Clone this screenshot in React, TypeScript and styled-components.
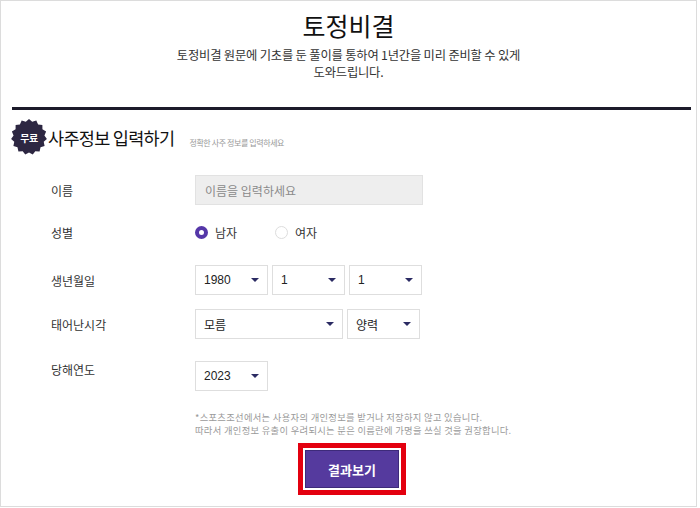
import React from "react";
import styled, { createGlobalStyle } from "styled-components";

const Global = createGlobalStyle`
  html, body { margin: 0; padding: 0; background: #fff; }
  body { font-family: "Noto Sans CJK KR", "Noto Sans", sans-serif; color: #222; }
  * { box-sizing: border-box; }
`;

const Page = styled.div`
  width: 697px;
  height: 507px;
  border: 1px solid #dcdcdc;
  display: flex;
  flex-direction: column;
  overflow: hidden;
`;

const Header = styled.header`
  display: flex;
  flex-direction: column;
  align-items: center;
  padding-top: 8px;
`;

const Title = styled.h1`
  margin: 0;
  font-size: 25px;
  line-height: 32px;
  font-weight: 400;
  color: #111;
`;

const Sub = styled.p`
  margin: 6px 0 0;
  font-size: 12.3px;
  line-height: 17px;
  color: #333;
  text-align: center;
  letter-spacing: -0.2px;
`;

const Divider = styled.hr`
  margin: 26px 0 0 11px;
  width: 679px;
  height: 3px;
  border: 0;
  background: #1c1b2a;
`;

const SectionHead = styled.div`
  display: flex;
  align-items: center;
  margin: 9px 0 0 10px;
`;

const Badge = styled.div`
  position: relative;
  width: 36px;
  height: 36px;
  display: flex;
  align-items: center;
  justify-content: center;
  span {
    position: relative;
    color: #fff;
    font-size: 10px;
    font-weight: 700;
    letter-spacing: -0.5px;
  }
  svg { position: absolute; inset: 0; }
`;

const SectionTitle = styled.h2`
  margin: 0 0 0 1px;
  font-size: 17.5px;
  font-weight: 400;
  color: #111;
  letter-spacing: -0.7px;
`;

const SectionHint = styled.span`
  margin: 10px 0 0 15px;
  font-size: 8px;
  color: #999;
  letter-spacing: -0.4px;
`;

const Form = styled.div`
  display: flex;
  flex-direction: column;
  padding-left: 50px;
`;

const Row = styled.div<{ $mt: number; $top?: boolean }>`
  display: flex;
  align-items: ${(p) => (p.$top ? "flex-start" : "center")};
  margin-top: ${(p) => p.$mt}px;
`;

const Label = styled.div<{ $pt?: number }>`
  width: 144px;
  font-size: 12px;
  color: #333;
  padding-top: ${(p) => p.$pt ?? 0}px;
`;

const Controls = styled.div`
  display: flex;
  gap: 4px;
`;

const NameInput = styled.input`
  width: 228px;
  height: 30px;
  background: #eeeeee;
  border: 1px solid #e2e2e2;
  padding: 0 9px;
  font-family: inherit;
  font-size: 12px;
  outline: none;
  &::placeholder { color: #8a8a8a; }
`;

const RadioGroup = styled.div`
  display: flex;
  align-items: center;
`;

const RadioItem = styled.label`
  display: flex;
  align-items: center;
  gap: 7px;
  width: 80px;
  font-size: 12px;
  color: #333;
`;

const RadioDot = styled.span<{ $on?: boolean }>`
  width: 13px;
  height: 13px;
  border-radius: 50%;
  border: ${(p) => (p.$on ? "4px solid #5537a8" : "1px solid #dddddd")};
  background: #fff;
`;

const Select = styled.div<{ $w: number }>`
  width: ${(p) => p.$w}px;
  height: 30px;
  border: 1px solid #dedede;
  background: #fff;
  display: flex;
  align-items: center;
  justify-content: space-between;
  padding: 0 8px 0 8px;
  font-size: 12px;
  color: #222;
  font-family: "Liberation Sans", "Noto Sans CJK KR", sans-serif;
`;

const Arrow = styled.span`
  width: 0;
  height: 0;
  border-left: 4px solid transparent;
  border-right: 4px solid transparent;
  border-top: 4px solid #2b2b63;
`;

const Note = styled.p`
  margin: 20px 0 0 194px;
  font-size: 9.3px;
  line-height: 13px;
  color: #9a9a9a;
  letter-spacing: 0.3px;
`;

const ButtonWrap = styled.div`
  display: flex;
  justify-content: center;
  margin-top: 6px;
  padding-left: 7px;
`;

const Frame = styled.div`
  border: 5px solid #e3000f;
  padding: 2px;
  background: #fff;
`;

const Submit = styled.button`
  width: 94px;
  height: 38px;
  background: #553a9e;
  border: 1px solid #3d2a7a;
  color: #fff;
  font-family: inherit;
  font-size: 13px;
  font-weight: 700;
`;

const Star = () => {
  const pts: string[] = [];
  const n = 15;
  for (let i = 0; i < n * 2; i++) {
    const r = i % 2 === 0 ? 18 : 15.5;
    const a = (Math.PI * i) / n - Math.PI / 2;
    pts.push(`${18 + r * Math.cos(a)},${18 + r * Math.sin(a)}`);
  }
  return (
    <svg width="36" height="36" viewBox="0 0 36 36">
      <polygon points={pts.join(" ")} fill="#2d2742" />
    </svg>
  );
};

const Sel = ({ w, v }: { w: number; v: string }) => (
  <Select $w={w}>
    <span>{v}</span>
    <Arrow />
  </Select>
);

export default function App() {
  return (
    <>
      <Global />
      <Page>
        <Header>
          <Title>토정비결</Title>
          <Sub>
            토정비결 원문에 기초를 둔 풀이를 통하여 1년간을 미리 준비할 수 있게
            <br />
            도와드립니다.
          </Sub>
        </Header>
        <Divider />
        <SectionHead>
          <Badge>
            <Star />
            <span>무료</span>
          </Badge>
          <SectionTitle>사주정보 입력하기</SectionTitle>
          <SectionHint>정확한 사주 정보를 입력하세요</SectionHint>
        </SectionHead>
        <Form>
          <Row $mt={20}>
            <Label>이름</Label>
            <NameInput placeholder="이름을 입력하세요" />
          </Row>
          <Row $mt={19}>
            <Label>성별</Label>
            <RadioGroup>
              <RadioItem>
                <RadioDot $on />
                남자
              </RadioItem>
              <RadioItem>
                <RadioDot />
                여자
              </RadioItem>
            </RadioGroup>
          </Row>
          <Row $mt={24}>
            <Label>생년월일</Label>
            <Controls>
              <Sel w={73} v="1980" />
              <Sel w={73} v="1" />
              <Sel w={73} v="1" />
            </Controls>
          </Row>
          <Row $mt={14}>
            <Label>태어난시각</Label>
            <Controls>
              <Sel w={148} v="모름" />
              <Sel w={73} v="양력" />
            </Controls>
          </Row>
          <Row $mt={22} $top>
            <Label $pt={0}>당해연도</Label>
            <Controls>
              <Sel w={73} v="2023" />
            </Controls>
          </Row>
        </Form>
        <Note>
          *스포츠조선에서는 사용자의 개인정보를 받거나 저장하지 않고 있습니다.
          <br />
          따라서 개인정보 유출이 우려되시는 분은 이름란에 가명을 쓰실 것을 권장합니다.
        </Note>
        <ButtonWrap>
          <Frame>
            <Submit>결과보기</Submit>
          </Frame>
        </ButtonWrap>
      </Page>
    </>
  );
}
